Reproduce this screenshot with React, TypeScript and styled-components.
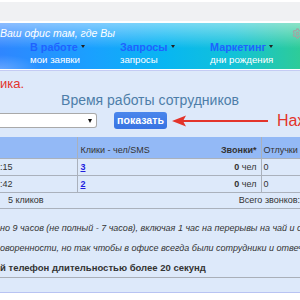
import React from 'react';
import styled, { createGlobalStyle } from 'styled-components';
import { Settings } from 'lucide-react';

const GlobalStyle = createGlobalStyle`
  html, body {
    margin: 0;
    padding: 0;
    background: #ffffff;
    overflow: hidden;
    font-family: "Liberation Sans", Arial, sans-serif;
  }
`;

const Page = styled.div`
  width: 300px;
  padding-top: 2px;
`;

const SearchStrip = styled.div`
  height: 19px;
  background: #f0f1f3;
  margin-bottom: 2px;
`;

const Header = styled.div`
  height: 46px;
  box-sizing: border-box;
  padding-top: 4px;
  background:
    linear-gradient(180deg, rgba(255, 255, 255, 0.45) 0%, rgba(255, 255, 255, 0) 55%),
    radial-gradient(ellipse 40px 14px at 0px 46px, rgba(255, 255, 255, 0.25), rgba(255, 255, 255, 0)),
    linear-gradient(90deg, #2f86ff 0%, #1aa0ff 30%, #08b6f2 55%, #12c2d8 78%, #2ecc98 100%);
`;

const SloganRow = styled.div`
  display: flex;
  justify-content: space-between;
  align-items: flex-start;
  height: 13px;
`;

const Slogan = styled.span`
  color: #ffffff;
  font-style: italic;
  font-size: 10.5px;
  line-height: 13px;
  white-space: nowrap;
`;

const GearClip = styled.span`
  display: flex;
  width: 8px;
  overflow: hidden;
  margin-top: 1px;
  color: #a3a3a3;

  svg {
    flex: none;
  }
`;

const Nav = styled.div`
  display: grid;
  grid-template-columns: 90px 90px 90px;
  padding-left: 30px;
  margin-top: 1px;
`;

const NavItem = styled.div`
  display: flex;
  flex-direction: column;
`;

const NavTitle = styled.span`
  display: flex;
  align-items: center;
  gap: 3px;
  color: #1f63ff;
  font-weight: bold;
  font-size: 10.8px;
  line-height: 13px;
  white-space: nowrap;
`;

const Caret = styled.span`
  width: 0;
  height: 0;
  border-left: 2.5px solid transparent;
  border-right: 2.5px solid transparent;
  border-top: 3px solid #222;
  margin-top: -2px;
`;

const NavSub = styled.span`
  color: #ffffff;
  font-size: 9.7px;
  line-height: 12px;
  white-space: nowrap;
`;

const Panel = styled.div`
  margin-top: 1px;
  background: #dde9fa;
  border-top: 1px solid #c4cbf4;
  border-bottom: 1px solid #b8c3f2;
  padding-bottom: 14px;
`;

const Notice = styled.div`
  color: #e3342b;
  font-size: 13px;
  line-height: 16px;
  margin-top: 5px;
`;

const Title = styled.div`
  text-align: center;
  color: #4d7ea9;
  font-size: 14px;
  line-height: 16px;
`;

const Controls = styled.div`
  display: flex;
  align-items: center;
  margin-top: 4px;
  height: 17px;
`;

const SelectBox = styled.div`
  box-sizing: border-box;
  flex: none;
  width: 97px;
  height: 15px;
  background: #ffffff;
  border: 1px solid #a9a9a9;
  border-left: none;
  border-radius: 0 3px 3px 0;
  display: flex;
  justify-content: flex-end;
  align-items: center;
  padding-right: 4px;
`;

const SelectArrow = styled.span`
  width: 0;
  height: 0;
  border-left: 2px solid transparent;
  border-right: 2px solid transparent;
  border-top: 4px solid #111;
`;

const ShowButton = styled.button`
  flex: none;
  margin-left: 17px;
  height: 17px;
  width: 53px;
  padding: 0;
  border: none;
  border-radius: 3px;
  background: linear-gradient(180deg, #4a86ec 0%, #3773e2 100%);
  color: #ffffff;
  font-family: "Liberation Sans", Arial, sans-serif;
  font-weight: bold;
  font-size: 10.6px;
  line-height: 17px;
`;

const Arrow = styled.svg`
  margin-left: 5px;
  flex: none;
`;

const Hint = styled.span`
  margin-left: 9px;
  color: #e3342b;
  font-size: 16px;
  line-height: 17px;
  white-space: nowrap;
`;

const Table = styled.table`
  margin-top: 8px;
  width: 300px;
  border-collapse: collapse;
  table-layout: fixed;
  font-size: 9px;
  color: #333;
`;

const HeadRow = styled.tr`
  background: #93b9f6;
  height: 21px;
`;

const Row = styled.tr<{ $height?: number }>`
  height: ${(p) => p.$height ?? 16}px;
  border-top: 1px solid #aab1bc;
`;

const Cell = styled.td<{ $align?: string; $divider?: boolean; $pad?: number }>`
  padding: 0 ${(p) => (p.$align === 'right' ? 4 : 0)}px 0 ${(p) => p.$pad ?? 3}px;
  text-align: ${(p) => p.$align ?? 'left'};
  border-right: ${(p) => (p.$divider ? '1px solid #aab1bc' : 'none')};
  white-space: nowrap;
  vertical-align: middle;
`;

const HeadCell = styled(Cell)`
  vertical-align: bottom;
  padding-bottom: 3px;
`;

const Link = styled.a`
  color: #1d1de0;
  font-weight: bold;
  text-decoration: underline;
`;

const Notes = styled.div`
  margin-top: 6px;
  font-size: 9px;
  color: #333;
  border-bottom: 1px solid #a9afb8;
  padding-bottom: 3px;
`;

const NoteLine = styled.div<{ $bold?: boolean }>`
  line-height: 12px;
  margin-bottom: 8px;
  white-space: nowrap;
  font-style: ${(p) => (p.$bold ? 'normal' : 'italic')};
  font-weight: ${(p) => (p.$bold ? 'bold' : 'normal')};
  font-size: ${(p) => (p.$bold ? 9.5 : 9)}px;
  &:last-child {
    margin-bottom: 0;
  }
`;

const menu = [
  { title: 'В работе', sub: 'мои заявки' },
  { title: 'Запросы', sub: 'запросы' },
  { title: 'Маркетинг', sub: 'дни рождения' },
];

const rows = [
  { time: ':15', clicks: '3' },
  { time: ':42', clicks: '2' },
];

export default function App() {
  return (
    <Page>
      <GlobalStyle />
      <SearchStrip />
      <Header>
        <SloganRow>
          <Slogan>Ваш офис там, где Вы</Slogan>
          <GearClip>
            <Settings size={11} strokeWidth={2.5} />
          </GearClip>
        </SloganRow>
        <Nav>
          {menu.map((m) => (
            <NavItem key={m.title}>
              <NavTitle>
                {m.title}
                <Caret />
              </NavTitle>
              <NavSub>{m.sub}</NavSub>
            </NavItem>
          ))}
        </Nav>
      </Header>
      <Panel>
        <Notice>ика.</Notice>
        <Title>Время работы сотрудников</Title>
        <Controls>
          <SelectBox>
            <SelectArrow />
          </SelectBox>
          <ShowButton>показать</ShowButton>
          <Arrow width="96" height="12" viewBox="0 0 96 12">
            <line x1="10" y1="6" x2="96" y2="6" stroke="#e3342b" strokeWidth="2" />
            <polygon points="0,6 14,0.5 11,6 14,11.5" fill="#e3342b" />
          </Arrow>
          <Hint>Наж</Hint>
        </Controls>
        <Table>
          <colgroup>
            <col style={{ width: 77 }} />
            <col style={{ width: 124 }} />
            <col style={{ width: 60 }} />
            <col style={{ width: 39 }} />
          </colgroup>
          <tbody>
            <HeadRow>
              <HeadCell $divider />
              <HeadCell>Клики - чел/SMS</HeadCell>
              <HeadCell $align="right" $divider>
                <b>Звонки*</b>
              </HeadCell>
              <HeadCell $pad={2}>Отлучки</HeadCell>
            </HeadRow>
            {rows.map((r) => (
              <Row key={r.time} $height={17}>
                <Cell $divider $pad={0}>{r.time}</Cell>
                <Cell>
                  <Link href="#">{r.clicks}</Link>
                </Cell>
                <Cell $align="right" $divider>
                  <b>0</b> чел
                </Cell>
                <Cell $pad={2}>0</Cell>
              </Row>
            ))}
            <Row>
              <Cell $pad={8}>5 кликов</Cell>
              <Cell colSpan={3} $align="right" style={{ paddingRight: 0 }}>
                Всего звонков:
              </Cell>
            </Row>
            <Row $height={8}>
              <Cell colSpan={4} />
            </Row>
          </tbody>
        </Table>
        <Notes>
          <NoteLine>но 9 часов (не полный - 7 часов), включая 1 час на перерывы на чай и об</NoteLine>
          <NoteLine>оворенности, но так чтобы в офисе всегда были сотрудники и отвеч</NoteLine>
          <NoteLine $bold>й телефон длительностью более 20 секунд</NoteLine>
        </Notes>
      </Panel>
    </Page>
  );
}
